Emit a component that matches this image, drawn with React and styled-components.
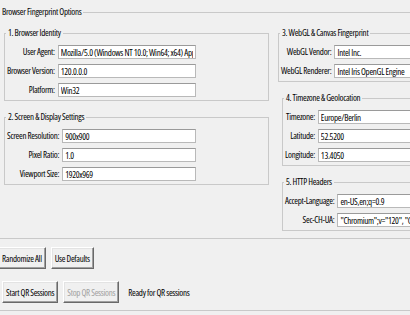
import { Fragment } from "react";
import styled, { createGlobalStyle } from "styled-components";

const GlobalStyle = createGlobalStyle`
  html, body {
    margin: 0;
    background: #f0f0f0;
  }
  body {
    font-family: "Open Sans", "DejaVu Sans", sans-serif;
    font-stretch: 75%;
    font-size: 9px;
    letter-spacing: -0.3px;
    color: #000;
  }
`;

const Window = styled.div`
  width: 410px;
  height: 315px;
  overflow: hidden;
  padding-top: 7px;
  box-sizing: border-box;
`;

const Group = styled.fieldset`
  margin: 0;
  padding: 0;
  min-width: 0;
  border: 1px solid #c9c9c9;
  box-sizing: border-box;
`;

const Title = styled.legend`
  margin-left: 1px;
  padding: 0 2px;
  height: 10px;
  line-height: 10px;
  white-space: nowrap;
`;

const Outer = styled(Group)`
  width: 620px;
  margin-left: -2px;
`;

const Columns = styled.div`
  display: grid;
  grid-template-columns: 265px 210px;
  column-gap: 9px;
  align-items: start;
  padding: 11px 0 7px 5px;
`;

const Column = styled.div`
  display: flex;
  flex-direction: column;
  gap: 11px;
`;

const Section = styled(Group)`
  margin-left: ${p => p.$indent || 0}px;
`;

const Fields = styled.div`
  display: grid;
  grid-template-columns: auto 1fr;
  column-gap: 3px;
  row-gap: 5px;
  align-items: center;
  padding: 7px ${p => p.$padRight || 0}px 3px 2px;
`;

const Label = styled.label`
  justify-self: end;
  white-space: nowrap;
  line-height: 14px;
`;

const Entry = styled.input`
  width: 100%;
  min-width: 0;
  height: 14px;
  box-sizing: border-box;
  margin: 0;
  padding: 0 2px;
  border: 1px solid #b9b9b9;
  border-top-color: #9a9a9a;
  background: #fff;
  color: #000;
  font: inherit;
  letter-spacing: inherit;
  outline: none;
`;

const Controls = styled.div`
  height: 72px;
  box-sizing: border-box;
  padding-top: 8px;
  border-bottom: 1px solid #c9c9c9;
  display: flex;
  flex-direction: column;
  gap: 12px;
`;

const ButtonRow = styled.div`
  display: flex;
  align-items: center;
  gap: 5px;
  margin-left: ${p => p.$shift}px;
`;

const Button = styled.button`
  height: 22px;
  margin: 0;
  padding: 0 3px;
  background: #f0f0f0;
  border: 1px solid;
  border-color: #fff #696969 #696969 #fff;
  box-shadow: inset -1px -1px 0 #a0a0a0, inset 1px 1px 0 #e3e3e3;
  color: ${p => (p.disabled ? "#a0a0a0" : "#000")};
  font: inherit;
  letter-spacing: inherit;
  white-space: nowrap;
`;

const Status = styled.span`
  margin-left: 4px;
  white-space: nowrap;
`;

const leftGroups = [
  {
    title: "1. Browser Identity",
    fields: [
      ["User Agent:", "Mozilla/5.0 (Windows NT 10.0; Win64; x64) AppleWebKit/537.36"],
      ["Browser Version:", "120.0.0.0"],
      ["Platform:", "Win32"],
    ],
  },
  {
    title: "2. Screen & Display Settings",
    fields: [
      ["Screen Resolution:", "900x900"],
      ["Pixel Ratio:", "1.0"],
      ["Viewport Size:", "1920x969"],
    ],
  },
];

const rightGroups = [
  {
    title: "3. WebGL & Canvas Fingerprint",
    indent: 0,
    fields: [
      ["WebGL Vendor:", "Intel Inc."],
      ["WebGL Renderer:", "Intel Iris OpenGL Engine"],
    ],
  },
  {
    title: "4. Timezone & Geolocation",
    indent: 4,
    fields: [
      ["Timezone:", "Europe/Berlin"],
      ["Latitude:", "52.5200"],
      ["Longitude:", "13.4050"],
    ],
  },
  {
    title: "5. HTTP Headers",
    indent: 4,
    fields: [
      ["Accept-Language:", "en-US,en;q=0.9"],
      ["Sec-CH-UA:", '"Chromium";v="120", "Google Chrome";v="120"'],
    ],
  },
];

function FieldGroup({ title, fields, indent, padRight }) {
  return (
    <Section $indent={indent}>
      <Title>{title}</Title>
      <Fields $padRight={padRight}>
        {fields.map(([label, value]) => (
          <Fragment key={label}>
            <Label>{label}</Label>
            <Entry readOnly value={value} />
          </Fragment>
        ))}
      </Fields>
    </Section>
  );
}

export default function App() {
  return (
    <>
      <GlobalStyle />
      <Window>
        <Outer>
          <Title>Browser Fingerprint Options</Title>
          <Columns>
            <Column>
              {leftGroups.map(g => (
                <FieldGroup key={g.title} {...g} padRight={72} />
              ))}
            </Column>
            <Column>
              {rightGroups.map(g => (
                <FieldGroup key={g.title} {...g} />
              ))}
            </Column>
          </Columns>
        </Outer>
        <Controls>
          <ButtonRow $shift={-2}>
            <Button>Randomize All</Button>
            <Button>Use Defaults</Button>
          </ButtonRow>
          <ButtonRow $shift={2}>
            <Button>Start QR Sessions</Button>
            <Button disabled>Stop QR Sessions</Button>
            <Status>Ready for QR sessions</Status>
          </ButtonRow>
        </Controls>
      </Window>
    </>
  );
}
